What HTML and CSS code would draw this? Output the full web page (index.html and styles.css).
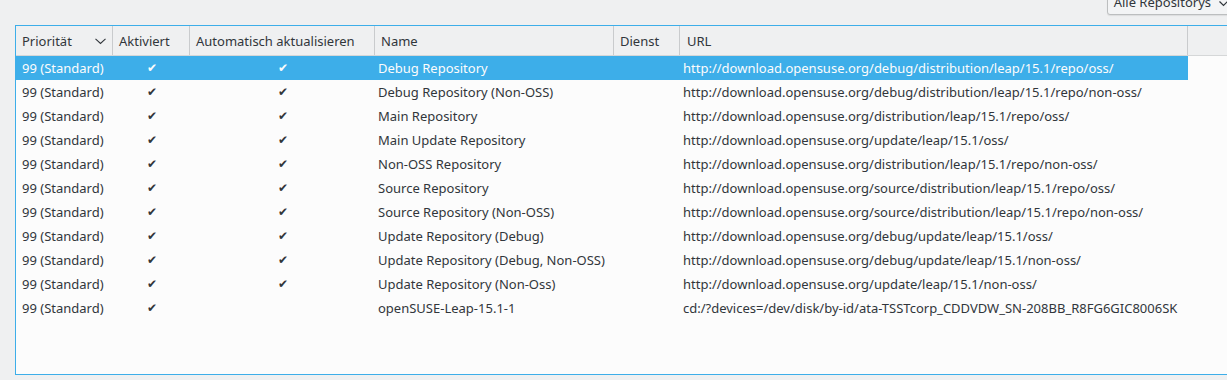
FILE: index.html
```html
<!DOCTYPE html>
<html lang="de">
<head>
    <meta charset="UTF-8">
    <title>Repositorys</title>
    <link rel="stylesheet" href="styles.css">
</head>
<body>
    <div class="toolbar">
        <div class="combo">Alle Repositorys <span class="combo-arrow"><svg width="9" height="6" viewBox="0 0 9 6"><path d="M0.5 0.5 L4.5 4.5 L8.5 0.5" fill="none" stroke="#31363b" stroke-width="1.2"/></svg></span></div>
    </div>
    <div class="view">
        <div class="row head">
            <div class="c c1">Priorität <svg class="sort" width="11" height="7" viewBox="0 0 11 7"><path d="M0.5 0.8 L5.5 5.5 L10.5 0.8" fill="none" stroke="#31363b" stroke-width="1.1"/></svg></div>
            <div class="c c2">Aktiviert</div>
            <div class="c c3">Automatisch aktualisieren</div>
            <div class="c c4">Name</div>
            <div class="c c5">Dienst</div>
            <div class="c c6">URL</div>
            <div class="c c7"></div>
        </div>
        <div class="body" id="rows"></div>
    </div>

    <script>
        const repos = [
            ['Debug Repository', true, 'http://download.opensuse.org/debug/distribution/leap/15.1/repo/oss/'],
            ['Debug Repository (Non-OSS)', true, 'http://download.opensuse.org/debug/distribution/leap/15.1/repo/non-oss/'],
            ['Main Repository', true, 'http://download.opensuse.org/distribution/leap/15.1/repo/oss/'],
            ['Main Update Repository', true, 'http://download.opensuse.org/update/leap/15.1/oss/'],
            ['Non-OSS Repository', true, 'http://download.opensuse.org/distribution/leap/15.1/repo/non-oss/'],
            ['Source Repository', true, 'http://download.opensuse.org/source/distribution/leap/15.1/repo/oss/'],
            ['Source Repository (Non-OSS)', true, 'http://download.opensuse.org/source/distribution/leap/15.1/repo/non-oss/'],
            ['Update Repository (Debug)', true, 'http://download.opensuse.org/debug/update/leap/15.1/oss/'],
            ['Update Repository (Debug, Non-OSS)', true, 'http://download.opensuse.org/debug/update/leap/15.1/non-oss/'],
            ['Update Repository (Non-Oss)', true, 'http://download.opensuse.org/update/leap/15.1/non-oss/'],
            ['openSUSE-Leap-15.1-1', false, 'cd:/?devices=/dev/disk/by-id/ata-TSSTcorp_CDDVDW_SN-208BB_R8FG6GIC8006SK']
        ];

        document.getElementById('rows').innerHTML = repos.map((r, i) => `
            <div class="row${i === 0 ? ' selected' : ''}">
                <div class="c c1">99 (Standard)</div>
                <div class="c c2 check">✔</div>
                <div class="c c3 check">${r[1] ? '✔' : ''}</div>
                <div class="c c4 data">${r[0]}</div>
                <div class="c c5"></div>
                <div class="c c6 data">${r[2]}</div>
            </div>
        `).join('');
    </script>
</body>
</html>
```

FILE: styles.css
```css
body { margin: 0; background: #eff0f1; font-family: "Noto Sans", sans-serif; font-size: 13px; color: #31363b; height: 380px; overflow: hidden; }
.toolbar { height: 25px; display: flex; justify-content: flex-end; overflow: hidden; }
.combo { margin-top: -11px; margin-right: -20px; height: 24px; padding: 0 18px 0 6px; display: flex; align-items: center; gap: 8px; border: 1px solid #bcbebf; border-radius: 3px; background: #f3f4f5; white-space: nowrap; box-shadow: 0 1px 1px rgba(0,0,0,0.08); }
.view { margin-left: 15px; height: 348px; border: 1px solid #3daee9; border-right: none; background: #fcfcfc; }
.row { display: flex; height: 24px; line-height: 24px; white-space: nowrap; }
.row.head { height: 29px; line-height: 31px; background: #eff0f1; border-bottom: 1px solid #d5d7d8; }
.c { box-sizing: border-box; overflow: hidden; flex: none; padding-left: 6px; }
.head .c { border-right: 1px solid #c9cbcd; }
.head .c7 { border-right: none; flex: 1; }
.c1 { width: 97px; position: relative; }
.c2 { width: 77px; }
.c3 { width: 185px; }
.c4 { width: 239px; }
.c5 { width: 66px; }
.c6 { width: 508px; }
.check { text-align: center; padding-left: 0; font-size: 12px; }
.data { padding-left: 3px; }
.head .c6 { padding-left: 7px; }
.sort { position: absolute; right: 6px; top: 12px; }
.selected { background: #3daee9; color: #fcfcfc; width: 1172px; }
```
